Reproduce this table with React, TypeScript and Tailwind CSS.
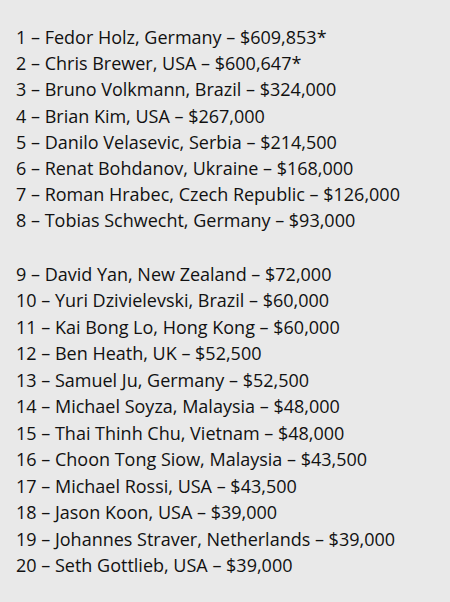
const first = [
  "1 – Fedor Holz, Germany – $609,853*",
  "2 – Chris Brewer, USA – $600,647*",
  "3 – Bruno Volkmann, Brazil – $324,000",
  "4 – Brian Kim, USA – $267,000",
  "5 – Danilo Velasevic, Serbia – $214,500",
  "6 – Renat Bohdanov, Ukraine – $168,000",
  "7 – Roman Hrabec, Czech Republic – $126,000",
  "8 – Tobias Schwecht, Germany – $93,000",
];

const second = [
  "9 – David Yan, New Zealand – $72,000",
  "10 – Yuri Dzivielevski, Brazil – $60,000",
  "11 – Kai Bong Lo, Hong Kong – $60,000",
  "12 – Ben Heath, UK – $52,500",
  "13 – Samuel Ju, Germany – $52,500",
  "14 – Michael Soyza, Malaysia – $48,000",
  "15 – Thai Thinh Chu, Vietnam – $48,000",
  "16 – Choon Tong Siow, Malaysia – $43,500",
  "17 – Michael Rossi, USA – $43,500",
  "18 – Jason Koon, USA – $39,000",
  "19 – Johannes Straver, Netherlands – $39,000",
  "20 – Seth Gottlieb, USA – $39,000",
];

export default function App() {
  return (
    <div className="bg-[#e9e9e9] min-h-[602px] w-full pl-4 pt-6 font-['Open_Sans',sans-serif] text-[18px] text-[#111111]">
      <div className="flex flex-col leading-[26.2px]">
        {first.map((t) => (
          <p key={t}>{t}</p>
        ))}
      </div>
      <div className="mt-[27px] flex flex-col leading-[26.5px]">
        {second.map((t) => (
          <p key={t}>{t}</p>
        ))}
      </div>
    </div>
  );
}
